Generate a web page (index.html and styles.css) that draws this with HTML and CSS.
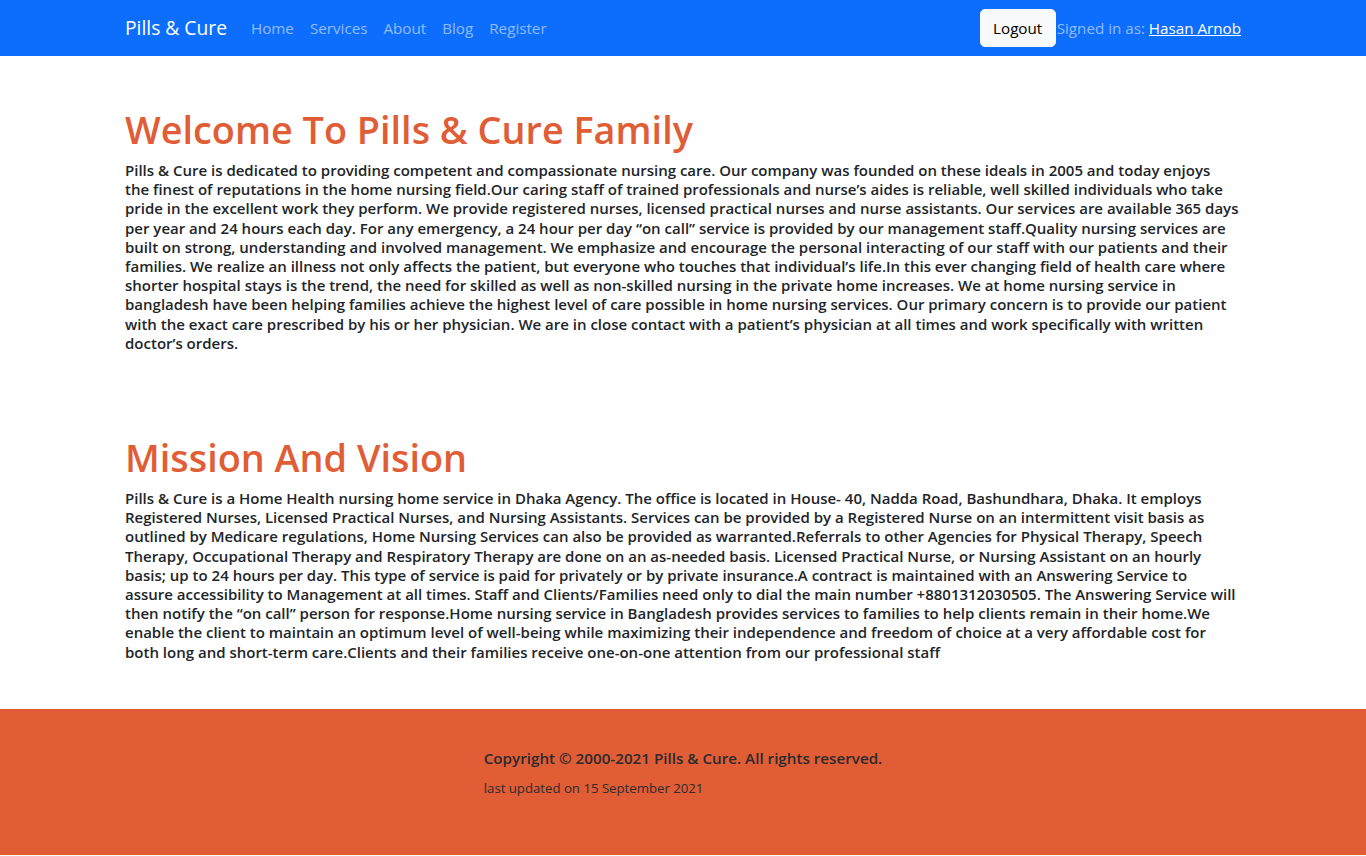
FILE: index.html
```html
<!DOCTYPE html>
<html lang="en">
<head>
<meta charset="utf-8">
<title>Pills &amp; Cure</title>
<link rel="stylesheet" href="styles.css">
</head>
<body>
<nav class="navbar">
  <div class="navbar-inner">
    <a class="brand" href="#">Pills &amp; Cure</a>
    <ul class="nav-links">
      <li><a href="#">Home</a></li>
      <li><a href="#">Services</a></li>
      <li><a href="#">About</a></li>
      <li><a href="#">Blog</a></li>
      <li><a href="#">Register</a></li>
    </ul>
    <div class="nav-user">
      <button class="btn-logout" type="button">Logout</button>
      <span class="signed-in">Signed in as: <a href="#" class="user-name">Hasan Arnob</a></span>
    </div>
  </div>
</nav>

<main class="content">
  <section class="section">
    <h1 class="section-title">Welcome To Pills &amp; Cure Family</h1>
    <p class="section-text">Pills &amp; Cure is dedicated to providing competent and compassionate nursing care. Our company was founded on these ideals in 2005 and today enjoys<br>
the finest of reputations in the home nursing field.Our caring staff of trained professionals and nurse’s aides is reliable, well skilled individuals who take<br>
pride in the excellent work they perform. We provide registered nurses, licensed practical nurses and nurse assistants. Our services are available 365 days<br>
per year and 24 hours each day. For any emergency, a 24 hour per day “on call” service is provided by our management staff.Quality nursing services are<br>
built on strong, understanding and involved management. We emphasize and encourage the personal interacting of our staff with our patients and their<br>
families. We realize an illness not only affects the patient, but everyone who touches that individual’s life.In this ever changing field of health care where<br>
shorter hospital stays is the trend, the need for skilled as well as non-skilled nursing in the private home increases. We at home nursing service in<br>
bangladesh have been helping families achieve the highest level of care possible in home nursing services. Our primary concern is to provide our patient<br>
with the exact care prescribed by his or her physician. We are in close contact with a patient’s physician at all times and work specifically with written<br>
doctor’s orders.</p>
  </section>
  <section class="section section-mission">
    <h2 class="section-title">Mission And Vision</h2>
    <p class="section-text">Pills &amp; Cure is a Home Health nursing home service in Dhaka Agency. The office is located in House- 40, Nadda Road, Bashundhara, Dhaka. It employs<br>
Registered Nurses, Licensed Practical Nurses, and Nursing Assistants. Services can be provided by a Registered Nurse on an intermittent visit basis as<br>
outlined by Medicare regulations, Home Nursing Services can also be provided as warranted.Referrals to other Agencies for Physical Therapy, Speech<br>
Therapy, Occupational Therapy and Respiratory Therapy are done on an as-needed basis. Licensed Practical Nurse, or Nursing Assistant on an hourly<br>
basis; up to 24 hours per day. This type of service is paid for privately or by private insurance.A contract is maintained with an Answering Service to<br>
assure accessibility to Management at all times. Staff and Clients/Families need only to dial the main number +8801312030505. The Answering Service will<br>
then notify the “on call” person for response.Home nursing service in Bangladesh provides services to families to help clients remain in their home.We<br>
enable the client to maintain an optimum level of well-being while maximizing their independence and freedom of choice at a very affordable cost for<br>
both long and short-term care.Clients and their families receive one-on-one attention from our professional staff</p>
  </section>
</main>

<footer class="footer">
  <div class="footer-inner">
    <p class="copyright">Copyright © 2000-2021 Pills &amp; Cure. All rights reserved.</p>
    <p class="updated">last updated on 15 September 2021</p>
  </div>
</footer>
</body>
</html>
```
FILE: styles.css
```css
* { box-sizing: border-box; }

html, body {
  margin: 0;
  padding: 0;
  background: #fff;
}

body {
  font-family: "Open Sans", "Noto Sans", sans-serif;
  color: #212529;
  font-size: 15.2px;
  line-height: 1.5;
}

/* ---------- navbar ---------- */
.navbar {
  background: #0d6efd;
  height: 56px;
}

.navbar-inner {
  width: 1116px;
  margin: 0 auto;
  height: 56px;
  display: flex;
  align-items: center;
}

.brand {
  font-size: 19.25px;
  line-height: 30px;
  color: #fff;
  text-decoration: none;
  margin-right: 16px;
}

.nav-links {
  list-style: none;
  margin: 0;
  padding: 0;
  display: flex;
}

.nav-links a {
  display: block;
  padding: 0 8px;
  line-height: 24px;
  color: rgba(255, 255, 255, 0.55);
  text-decoration: none;
}

.nav-user {
  margin-left: auto;
  display: flex;
  align-items: center;
}

.btn-logout {
  font-family: inherit;
  font-size: 15.2px;
  line-height: 24px;
  height: 38px;
  width: 76px;
  padding: 6px 0;
  color: #000;
  background: #f8f9fa;
  border: 1px solid #f8f9fa;
  border-radius: 5px;
  margin-right: 1px;
}

.signed-in {
  color: rgba(255, 255, 255, 0.55);
  line-height: 24px;
}

.user-name {
  color: #fff;
  text-decoration: underline;
}

/* ---------- content ---------- */
.content {
  width: 1116px;
  margin: 0 auto;
  padding-top: 50px;
  padding-bottom: 47px;
}

.section-title {
  margin: 0 0 7px;
  font-size: 37.8px;
  line-height: 48px;
  font-weight: 600;
  color: #e05d35;
}

.section-text {
  margin: 0;
  font-size: 15px;
  line-height: 19.2px;
  font-weight: 600;
  color: #212529;
}

.section-mission {
  margin-top: 81px;
}

/* ---------- footer ---------- */
.footer {
  background: #e05d35;
  padding: 40px 0 58px;
  display: flex;
  justify-content: center;
}

.footer-inner {
  text-align: left;
}

.copyright {
  margin: 0 0 12px;
  font-size: 15.2px;
  line-height: 19.2px;
  font-weight: 600;
  color: #2b2a2e;
}

.updated {
  margin: 0;
  font-size: 13.2px;
  line-height: 16.8px;
  color: #2f2c2e;
}
```
